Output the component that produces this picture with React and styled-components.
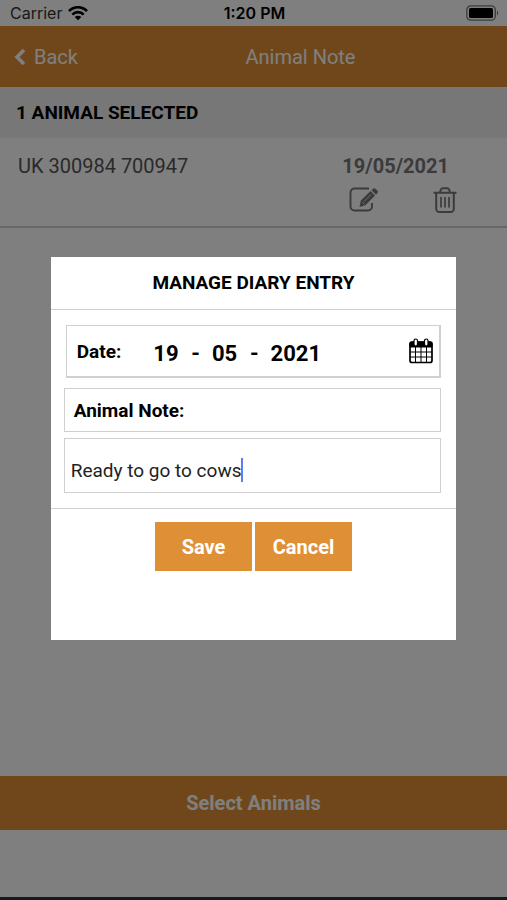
import React, { useState } from 'react'
import styled, { createGlobalStyle } from 'styled-components';

const GlobalStyle = createGlobalStyle`
  :root {
    --orange: #df8f36;
    --line: #d0d0d0;
  }
  * {
    box-sizing: border-box;
  }
  body {
    margin: 0;
    font-family: Roboto, "Liberation Sans", sans-serif;
    color: #000;
  }
  button, input {
    font-family: inherit;
    border: 0;
    padding: 0;
    background: none;
    color: inherit;
  }
`;
const Screen = styled.div`
  min-height: 100vh;
  display: flex;
  flex-direction: column;
  background-color: #fff;
  border-bottom: 3px solid #303036;
`;
const StatusBar = styled.div`
  display: grid;
  grid-template-columns: 1fr auto 1fr;
  align-items: center;
  height: 26px;
  padding: 0 8px 0 10px;
  font-family: Inter, "Liberation Sans", sans-serif;
  font-size: 16px;
  svg:last-child {
    justify-self: end;
  }
`;
const Carrier = styled.span`
  display: flex;
  align-items: center;
  gap: 6px;
  color: #333;
`;
const Clock = styled.span`
  font-weight: 600;
`;
const Header = styled.header`
  display: flex;
  align-items: center;
  gap: 16px;
  height: 61px;
  padding-left: 14px;
  background-color: var(--orange);
  color: #fff;
`;
const BackButton = styled.button`
  display: flex;
  align-items: center;
  gap: 8px;
  font-size: 20px;
`;
const Title = styled.h1`
  flex: 1;
  margin: 0;
  font-size: 20px;
  font-weight: 400;
  text-align: center;
`;
const SectionTitle = styled.h2`
  margin: 0;
  padding: 0 16px;
  background-color: #eee;
  font-size: 19px;
  line-height: 51px;
`;
const Row = styled.div`
  display: flex;
  justify-content: space-between;
  height: 90px;
  padding: 16px 50px 0 18px;
  border-bottom: 2px solid var(--line);
  font-size: 20px;
  line-height: 24px;
  color: #555;
`;
const RowDate = styled.div`
  padding-right: 8px;
  color: #777;
  font-weight: 700;
`;
const RowActions = styled.div`
  display: flex;
  justify-content: space-between;
  padding: 9px 0 0 7px;
`;
const IconButton = styled.button`
  display: flex;
`;
const SelectButton = styled.button`
  height: 54px;
  margin: auto 0 67px;
  background-color: var(--orange);
  color: #fff;
  font-size: 20px;
  font-weight: 700;
`;
const Overlay = styled.div`
  position: fixed;
  inset: 0;
  display: flex;
  align-items: center;
  justify-content: center;
  padding-bottom: 3px;
  background-color: rgba(0, 0, 0, 0.5);
`;
const Modal = styled.form`
  width: 80%;
  padding-bottom: 69px;
  background-color: #fff;
`;
const ModalTitle = styled.h2`
  margin: 0;
  border-bottom: 1px solid var(--line);
  font-size: 19px;
  line-height: 52px;
  text-align: center;
`;
const Fields = styled.div`
  display: flex;
  flex-direction: column;
  padding: 15px 15px 15px 13px;
  border-bottom: 1px solid var(--line);
`;
const DateBox = styled.div`
  display: flex;
  align-items: center;
  height: 53px;
  margin: 0 0 10px 2px;
  padding: 0 6px 0 10px;
  border: 1px solid var(--line);
  border-width: 1px 2px 2px 1px;
`;
const Label = styled.label`
  font-size: 19px;
  font-weight: 700;
`;
const DateParts = styled.div`
  display: flex;
  flex: 1;
  gap: 12px;
  padding: 4px 0 0 32px;
  font-size: 22px;
  font-weight: 700;
`;
const DateInput = styled.input`
  width: ${props => (props.$year ? 52 : 26)}px;
  font-size: 22px;
  font-weight: 700;
`;
const NoteLabelBox = styled.div`
  display: flex;
  align-items: center;
  height: 44px;
  margin-bottom: 6px;
  padding-left: 9px;
  border: 1px solid var(--line);
`;
const NoteBox = styled.div`
  display: flex;
  align-items: center;
  height: 55px;
  padding: 9px 6px 0;
  border: 1px solid var(--line);
`;
const NoteInput = styled.input`
  field-sizing: content;
  min-width: 1px;
  max-width: 100%;
  font-size: 19px;
  color: #222;
  outline: none;
  caret-color: transparent;
`;
const Caret = styled.span`
  width: 2px;
  height: 24px;
  background-color: #5c7ff0;
`;
const Buttons = styled.div`
  display: flex;
  justify-content: center;
  gap: 3px;
  padding-top: 13px;
`;
const Button = styled.button`
  width: 97px;
  height: 49px;
  background-color: var(--orange);
  color: #fff;
  font-size: 20px;
  font-weight: 700;
`;

const WifiIcon = () => (
  <svg width="20" height="15" viewBox="0 0 20 15" fill="none" stroke="#000" strokeWidth="2.6">
    <path d="M1 5.2C6-.1 14-.1 19 5.2" />
    <path d="M4.3 8.6c3.2-3.3 8.2-3.3 11.4 0" />
    <path d="M6.700 10.900c1.900-1.600 4.700-1.600 6.600 0L10 14.300z" fill="#000" stroke="none" />
  </svg>
);
const BatteryIcon = () => (
  <svg width="33" height="16" viewBox="0 0 33 16">
    <rect x="0.8" y="0.8" width="28.5" height="14.4" rx="4" fill="none" stroke="#777" strokeWidth="1.3" />
    <rect x="3" y="3" width="24" height="10" rx="1.5" fill="#000" />
    <path d="M31 5.5c1.6 1 1.6 4 0 5z" fill="#777" />
  </svg>
);
const ChevronIcon = () => (
  <svg width="12" height="18" viewBox="0 0 12 18" fill="none" stroke="#fff" strokeWidth="3.6">
    <path d="M10 2 3 9l7 7" />
  </svg>
);
const EditIcon = () => (
  <svg width="30" height="25" viewBox="0 0 30 25" fill="none" stroke="#777" strokeWidth="1.9">
    <path d="M20 1.500H5.500a4 4 0 0 0-4 4v14a4 4 0 0 0 4 4H19a4 4 0 0 0 4-4V16" />
    <path d="m10.500 20 1.400-6.500L21.500 4l4.500 4.500-9.600 9.700z" fill="#777" stroke="none" />
    <path d="m13.500 15.500 1.700 1.700M15 14.500 22 7.500" stroke="#fff" strokeWidth="0.8" />
    <path d="m22.500 3.300 1.500-1.500q1.200-1 2.500 0l2 2q1 1.200 0 2.300L27 7.700z" fill="#777" stroke="none" />
  </svg>
);
const TrashIcon = () => (
  <svg width="24" height="26" viewBox="0 0 24 26" fill="none" stroke="#777" strokeWidth="2">
    <path d="M0.500 5.800h23M3.200 6v16a3 3 0 0 0 3 3h11.600a3 3 0 0 0 3-3V6M7 5.500C7.500 2.500 8 1.200 10 1.200h4c2 0 2.500 1.300 3 4.300" />
    <path d="M8 10v10.500M12 10v10.500M16 10v10.500" strokeWidth="1.700" />
  </svg>
);
const CalendarIcon = () => (
  <svg width="24" height="26" viewBox="0 0 24 26" fill="none" stroke="#000">
    <rect x="1" y="4" width="22" height="20.5" rx="2" strokeWidth="1.7" fill="#fff" />
    <path d="M1 9V5.5Q1 4 2.500 4h19Q23 4 23 5.500V9z" fill="#000" />
    <path d="M6.500 9v15M12 9v15M17.500 9v15M1 14h22M1 19h22" strokeWidth="1" />
    <rect x="5" y="1" width="3.5" height="7" rx="1.7" fill="#fff" strokeWidth="1.2" />
    <rect x="15.5" y="1" width="3.5" height="7" rx="1.7" fill="#fff" strokeWidth="1.2" />
  </svg>
);

function App() {
    const [note, setNote] = useState('Ready to go to cows');
    return (
      <>
        <GlobalStyle />
        <Screen>
          <StatusBar>
            <Carrier>Carrier <WifiIcon /></Carrier>
            <Clock>1:20 PM</Clock>
            <BatteryIcon />
          </StatusBar>
          <Header>
            <BackButton type="button"><ChevronIcon />Back</BackButton>
            <Title>Animal Note</Title>
          </Header>
          <SectionTitle>1 ANIMAL SELECTED</SectionTitle>
          <Row>
            <span>UK 300984 700947</span>
            <div>
              <RowDate>19/05/2021</RowDate>
              <RowActions>
                <IconButton type="button" aria-label="Edit"><EditIcon /></IconButton>
                <IconButton type="button" aria-label="Delete"><TrashIcon /></IconButton>
              </RowActions>
            </div>
          </Row>
          <SelectButton type="button">Select Animals</SelectButton>
        </Screen>
        <Overlay>
          <Modal role="dialog" aria-labelledby="modal-title" onSubmit={e => e.preventDefault()}>
            <ModalTitle id="modal-title">MANAGE DIARY ENTRY</ModalTitle>
            <Fields>
              <DateBox>
                <Label htmlFor="day">Date:</Label>
                <DateParts>
                  <DateInput id="day" defaultValue="19" />
                  <span>-</span>
                  <DateInput aria-label="Month" defaultValue="05" />
                  <span>-</span>
                  <DateInput $year aria-label="Year" defaultValue="2021" />
                </DateParts>
                <IconButton type="button" aria-label="Pick a date"><CalendarIcon /></IconButton>
              </DateBox>
              <NoteLabelBox>
                <Label htmlFor="note">Animal Note:</Label>
              </NoteLabelBox>
              <NoteBox>
                <NoteInput id="note" value={note} onChange={e => setNote(e.target.value)} />
                <Caret />
              </NoteBox>
            </Fields>
            <Buttons>
              <Button type="submit">Save</Button>
              <Button type="button">Cancel</Button>
            </Buttons>
          </Modal>
        </Overlay>
      </>
    )
}

export default App
